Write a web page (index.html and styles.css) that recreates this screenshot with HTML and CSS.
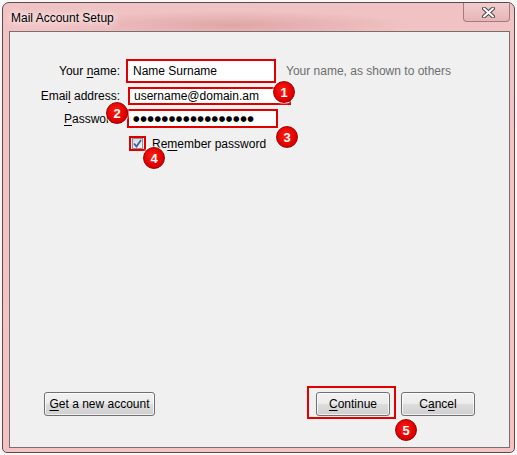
FILE: index.html
```html
<!DOCTYPE html>
<html lang="en">
<head>
    <meta charset="UTF-8">
    <title>Mail Account Setup</title>
    <link rel="stylesheet" href="styles.css">
</head>
<body>
    <div class="window">
        <div class="titlebar">
            <span class="title">Mail Account Setup</span>
            <div class="close">
                <svg width="13" height="11" viewBox="0 0 13 11">
                    <path d="M2 1.5 L11 9.5 M11 1.5 L2 9.5" stroke="#4a4446" stroke-width="4" stroke-linecap="round"/>
                    <path d="M2 1.5 L11 9.5 M11 1.5 L2 9.5" stroke="#ffffff" stroke-width="2" stroke-linecap="round"/>
                </svg>
            </div>
        </div>

        <div class="content">
            <div class="form">
                <div class="row row-name">
                    <span class="label">Your <u>n</u>ame:</span>
                    <div class="field field-name">Name Surname</div>
                    <span class="hint">Your name, as shown to others</span>
                </div>
                <div class="row row-email">
                    <span class="label">Emai<u>l</u> address:</span>
                    <div class="field field-email">username@domain.am</div>
                </div>
                <div class="row row-pass">
                    <span class="label"><u>P</u>assword:</span>
                    <div class="field field-pass"><span class="dots">●●●●●●●●●●●●●●●●●</span></div>
                </div>
                <div class="row row-check">
                    <span class="label"></span>
                    <div class="check-mark">
                        <div class="checkbox">
                            <svg width="9" height="9" viewBox="0 0 9 9">
                                <path d="M1 4.5 L3.5 7.5 L8 1" fill="none" stroke="#3f5ea8" stroke-width="1.8"/>
                            </svg>
                        </div>
                    </div>
                    <span class="check-label">Re<u>m</u>ember password</span>
                </div>

                <span class="badge badge-1">1</span>
                <span class="badge badge-2">2</span>
                <span class="badge badge-3">3</span>
                <span class="badge badge-4">4</span>
            </div>

            <div class="footer">
                <button class="btn btn-new"><u>G</u>et a new account</button>
                <div class="mark-box">
                    <button class="btn btn-main"><u>C</u>ontinue</button>
                    <span class="badge badge-5">5</span>
                </div>
                <button class="btn btn-cancel">C<u>a</u>ncel</button>
            </div>
        </div>
    </div>
</body>
</html>
```

FILE: styles.css
```css
body {
    margin: 0;
    background: #f7f7f7;
    font-family: "Liberation Sans", Arial, sans-serif;
    font-size: 12px;
    color: #000;
}
u {
    text-decoration-thickness: 1px;
    text-underline-offset: 2px;
}
.window {
    box-sizing: border-box;
    width: 513px;
    height: 451px;
    margin: 2px 0 0 2px;
    padding: 0 4px 4px 6px;
    display: flex;
    flex-direction: column;
    border: 1px solid #5e4a4c;
    border-radius: 7px 7px 5px 5px;
    background:
        radial-gradient(ellipse 180px 14px at 230px 22px, rgba(200, 130, 132, 0.45), rgba(200, 130, 132, 0)),
        linear-gradient(to bottom, #efc2c3, #f2c3c4 30px, #f4c2c3);
}
.titlebar {
    height: 28px;
    display: flex;
    justify-content: space-between;
    align-items: flex-start;
    padding-left: 2px;
}
.title {
    margin-top: 8px;
    font-size: 12px;
    color: #000;
    text-shadow: 0 0 6px #fff, 0 0 10px rgba(255, 255, 255, 0.9);
}
.close {
    box-sizing: border-box;
    width: 47px;
    height: 19px;
    display: flex;
    align-items: center;
    justify-content: center;
    padding-left: 3px;
    border: 1px solid #a27c7e;
    border-top: none;
    border-radius: 0 0 4px 4px;
    background: linear-gradient(to bottom, #f1cdcd, #ecc0c1 50%, #e7b6b7);
}
.content {
    flex: 1;
    display: flex;
    flex-direction: column;
    border: 1px solid #7a6d6e;
    background: #f0f0f0;
}
.form {
    position: relative;
    margin-top: 27px;
}
.row {
    display: flex;
    align-items: center;
}
.row-email { margin-top: 4px; }
.row-pass { margin-top: 4px; }
.row-check { margin-top: 8px; }
.label {
    width: 110px;
    flex: none;
    text-align: right;
}
.field {
    box-sizing: border-box;
    display: flex;
    align-items: center;
    border: 2px solid #e00000;
    background: #fff;
    white-space: nowrap;
}
.field-name {
    width: 150px;
    height: 24px;
    margin-left: 6px;
    padding-left: 5px;
}
.field-email {
    width: 163px;
    height: 18px;
    margin-left: 8px;
    padding-left: 4px;
}
.field-pass {
    width: 151px;
    height: 19px;
    margin-left: 7px;
    padding-left: 4px;
}
.dots {
    font-family: "DejaVu Sans", sans-serif;
    font-size: 7.5px;
    letter-spacing: 0.6px;
}
.hint {
    margin-left: 10px;
    color: #6d6d6d;
}
.check-mark {
    box-sizing: border-box;
    width: 17px;
    height: 15px;
    margin-left: 9px;
    padding: 0 0 0 1px;
    display: flex;
    align-items: center;
    border: 2px solid #e00000;
}
.checkbox {
    box-sizing: border-box;
    width: 11px;
    height: 11px;
    display: flex;
    align-items: center;
    justify-content: center;
    border: 1px solid #8f8f8f;
    background: linear-gradient(135deg, #d8d8d8, #f4f4f4);
}
.check-label {
    margin-left: 6px;
}
.badge {
    position: absolute;
    box-sizing: border-box;
    width: 22px;
    height: 22px;
    display: flex;
    align-items: center;
    justify-content: center;
    border: 1px solid #a00000;
    border-radius: 50%;
    background: radial-gradient(circle at 45% 40%, #ff1f10, #e00000 60%, #c80000);
    color: #fff;
    font-weight: bold;
    font-size: 13px;
    box-shadow: 0 0 1px 1px rgba(255, 255, 255, 0.6);
}
.badge-1 { left: 263px; top: 22px; }
.badge-2 { left: 96px; top: 43px; }
.badge-3 { left: 266px; top: 67px; }
.badge-4 { left: 133px; top: 88px; }
.badge-5 { left: 86px; top: 31px; }
.footer {
    margin-top: auto;
    display: flex;
    align-items: flex-end;
    padding: 0 34px 28px 34px;
}
.btn {
    box-sizing: border-box;
    height: 24px;
    min-width: 74px;
    padding: 0 4px;
    border: 1px solid #707070;
    border-radius: 3px;
    background: linear-gradient(to bottom, #f2f2f2, #ebebeb 50%, #dddddd 50%, #cfcfcf);
    font-family: inherit;
    font-size: 12px;
    color: #000;
    white-space: nowrap;
    box-shadow: inset 0 0 0 1px rgba(255, 255, 255, 0.7);
}
.btn-new {
    width: 111px;
    padding: 0;
    margin-bottom: 3px;
}
.mark-box {
    position: relative;
    margin-left: auto;
    padding: 4px 4px 1px 7px;
    border: 2px solid #e00000;
}
.btn-main {
    display: block;
}
.btn-cancel {
    margin-left: 5px;
    margin-bottom: 3px;
}
```
